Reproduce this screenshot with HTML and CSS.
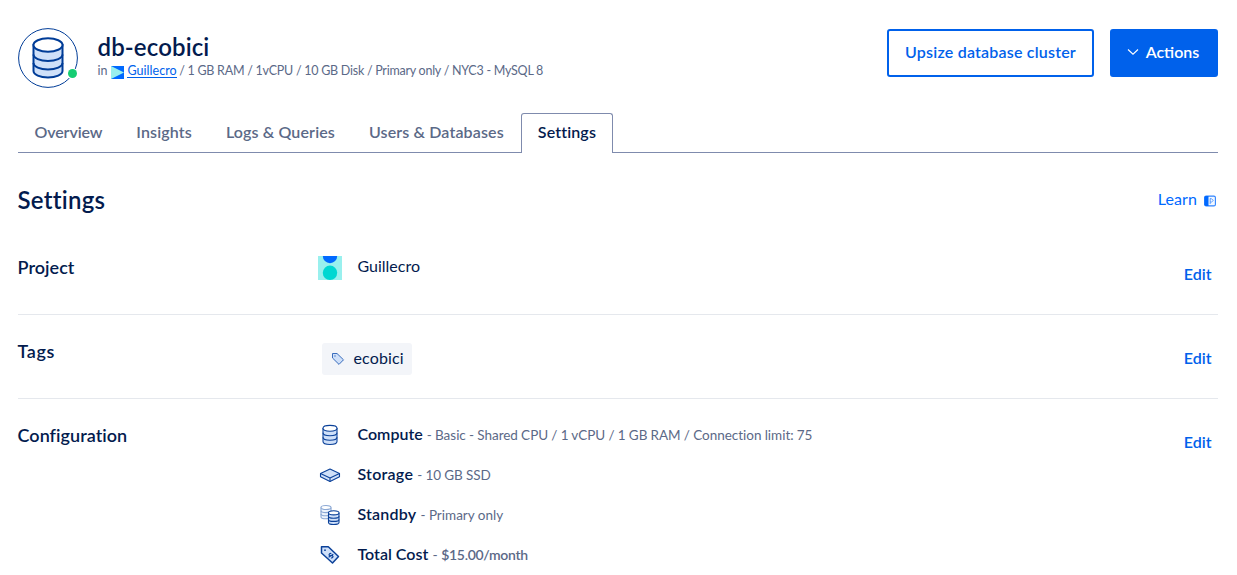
FILE: index.html
```
<!DOCTYPE html>
<html lang="en">
<head>
<meta charset="utf-8">
<title>db-ecobici</title>
<link rel="stylesheet" href="styles.css">
</head>
<body>
<main class="page">
  <header class="header">
    <div class="avatar">
      <svg width="60" height="60" viewBox="0 0 60 60" fill="none" stroke="#003c97">
        <circle cx="30" cy="30" r="29.4" stroke-width="1" fill="#fff"/>
        <path d="M15.5 16v27c0 3.6 6.5 6.500 14.500 6.500s14.500-2.900 14.500-6.500V16" fill="#cfe0f9" stroke-width="2"/>
        <ellipse cx="30" cy="17" rx="14.500" ry="6.700" fill="#fff" stroke-width="2"/>
        <path d="M15.500 26.500c0 3.600 6.500 6.500 14.500 6.500s14.500-2.900 14.500-6.500M15.500 35c0 3.600 6.500 6.500 14.500 6.500s14.500-2.900 14.500-6.500" stroke-width="2"/>
      </svg>
      <span class="status"></span>
    </div>
    <div class="heading">
      <h1 class="title">db-ecobici</h1>
      <div class="meta">
        <span>in</span>
        <svg class="flag" width="13" height="13" viewBox="0 0 13 13"><path fill="#0069ff" d="M0 0h13v13H0z"/><path fill="#99f0ee" d="M0 0l13 6.500L0 13z"/></svg>
        <a class="project-link">Guillecro</a>
        <span class="specs">/ 1 GB RAM / 1vCPU / 10 GB Disk / Primary only / NYC3 - MySQL 8</span>
      </div>
    </div>
    <div class="buttons">
      <button class="btn btn-outline">Upsize database cluster</button>
      <button class="btn btn-primary">
        <svg width="12" height="8" viewBox="0 0 12 8" fill="none" stroke="#fff" stroke-width="1.100"><path d="M1 1.500l5 4.700 5-4.700"/></svg>
        <span>Actions</span>
      </button>
    </div>
  </header>

  <nav class="tabs">
    <a class="tab tab-overview">Overview</a>
    <a class="tab">Insights</a>
    <a class="tab">Logs &amp; Queries</a>
    <a class="tab">Users &amp; Databases</a>
    <a class="tab tab-active">Settings</a>
  </nav>

  <div class="section-head">
    <h2 class="section-title">Settings</h2>
    <a class="learn">Learn
      <svg width="12" height="12" viewBox="0 0 12 12" fill="none"><rect x=".6" y="1.100" width="10.800" height="9.800" rx="1.500" stroke="#2e83ff" stroke-width="1.100" fill="#f3f8ff"/><path d="M1.500 1H4.500v10H1.500L.5 10V2z" fill="#0069ff"/><path d="M6 3.700h1.500l1.800 1.800-1.800 1.500H6M6.200 3.500v5.500" stroke="#4d95ff" stroke-width=".9"/></svg>
    </a>
  </div>

  <section class="row">
    <h3 class="label">Project</h3>
    <div class="value value-project">
      <svg width="24" height="24" viewBox="0 0 24 24"><path fill="#99f0ee" d="M0 0h24v24H0z"/><path fill="#0069ff" d="M4.800 0a7.200 7.200 0 0 0 14.400 0z"/><circle cx="12" cy="16.800" r="7.200" fill="#00d7d2"/></svg>
      <span class="project-name">Guillecro</span>
    </div>
    <a class="edit">Edit</a>
  </section>

  <section class="row">
    <h3 class="label tags-label">Tags</h3>
    <div class="value value-tags">
      <span class="chip">
        <svg width="14" height="14" viewBox="0 0 14 14" stroke="#3a6dbd" fill="#cfe0f9"><path d="M1.500 1.500h4.500l6.500 6.300-4.500 4.600L1.500 6z"/><circle cx="4" cy="4" r=".7" fill="#3a6dbd" stroke="none"/></svg>
        <span class="chip-text">ecobici</span>
      </span>
    </div>
    <a class="edit">Edit</a>
  </section>

  <section class="row row-last">
    <h3 class="label">Configuration</h3>
    <ul class="value specs-list">
      <li class="spec">
        <svg width="24" height="24" viewBox="0 0 24 24" fill="none" stroke="#0b4199" stroke-width="1.100"><path d="M5 5v13.500c0 1.700 3 3 7 3s7-1.300 7-3V5" fill="#cfe0f9"/><ellipse cx="12" cy="5.300" rx="7" ry="2.900" fill="#fff"/><path d="M5 9.800c0 1.700 3 3 7 3s7-1.300 7-3M5 14.200c0 1.700 3 3 7 3s7-1.300 7-3"/></svg>
        <p class="spec-text"><b class="spec-name compute">Compute</b> <span class="detail detail-long">- Basic - Shared CPU / 1 vCPU / 1 GB RAM / Connection limit: 75</span></p>
      </li>
      <li class="spec">
        <svg width="24" height="24" viewBox="0 0 24 24" fill="#cfe0f9" stroke="#0b4199" stroke-width="1.100" stroke-linejoin="round"><path d="M2.500 10.500L12 6l9.500 4.500v3.300L12 18.500l-9.500-4.700z"/><path d="M2.500 10.500L12 15l9.500-4.500M12 15v3.500" fill="none"/></svg>
        <p class="spec-text"><b class="spec-name storage">Storage</b> <span class="detail detail-size">- 10 GB SSD</span></p>
      </li>
      <li class="spec">
        <svg width="24" height="24" viewBox="0 0 24 24" fill="none" stroke-width="1.100"><g stroke="#8ba8d4"><path d="M3 4.500V14c0 1 2 1.800 5 1.800s5-.8 5-1.800V4.500" fill="#edf4fd"/><ellipse cx="8" cy="4.500" rx="5" ry="2" fill="#fff"/><path d="M3 7.800c0 1 2 1.800 5 1.800s5-.8 5-1.800M3 11c0 1 2 1.800 5 1.800s5-.8 5-1.800"/></g><g stroke="#0b4199"><path d="M10.500 9.800V19.500c0 1.200 2 2 5 2s5.500-.8 5.500-2V9.800" fill="#cfe0f9"/><ellipse cx="15.750" cy="9.800" rx="5.250" ry="2.100" fill="#fff"/><path d="M10.500 13.200c0 1.200 2 2 5 2s5.500-.8 5.500-2M10.500 16.400c0 1.200 2 2 5 2s5.500-.8 5.500-2"/></g></svg>
        <p class="spec-text"><b class="spec-name standby">Standby</b> <span class="detail detail-standby">- Primary only</span></p>
      </li>
      <li class="spec">
        <svg width="24" height="24" viewBox="0 0 24 24" fill="none" stroke="#0b4199" stroke-linejoin="round"><path d="M3.500 3.800h6.800l10.200 9.700-6 6.500L3.500 10z" fill="#cfe0f9" stroke-width="1.500"/><circle cx="7" cy="7.200" r=".9" fill="#0b4199" stroke="none"/><path d="M13.300 10.700c-1.400-.7-2.800.6-2 1.800.8 1 2.100-.6 3.200.3 1.200 1-.1 2.700-1.600 2M15.300 11.300l-4.700 3" stroke-width="1.200"/></svg>
        <p class="spec-text"><b class="spec-name">Total Cost</b> <span class="detail">- <b class="price">$15.00/month</b></span></p>
      </li>
    </ul>
    <a class="edit">Edit</a>
  </section>
</main>
</body>
</html>
```

FILE: styles.css
```
* { box-sizing: border-box; margin: 0; padding: 0; }
html, body { height: 575px; overflow: hidden; }
body {
  background: #fff;
  color: #031b4e;
  font: 16px/24px Lato, "Open Sans", sans-serif;
  font-variant-ligatures: none;
}
svg { display: block; flex: none; }
.page { width: 1218px; padding: 28px 0 0 18px; }

.header { display: flex; height: 60px; }
.avatar { position: relative; width: 60px; height: 60px; }
.status {
  position: absolute;
  left: 50px;
  top: 41px;
  width: 9px;
  height: 9px;
  border-radius: 50%;
  background: #15cd72;
  box-shadow: 0 0 0 1px #fff;
}
.heading { margin-left: 19.5px; padding-top: 4px; }
.title { font-size: 24px; line-height: 30px; font-weight: 600; letter-spacing: .12px; }
.meta { display: flex; font-size: 12.5px; line-height: 18px; color: #5b6987; white-space: nowrap; }
.flag { margin: 4px 3px 0 4px; }
.project-link {
  height: 16px;
  color: #0061eb;
  border-bottom: 1px solid #0061eb;
  letter-spacing: .04px;
}
.specs { margin-left: 2.5px; letter-spacing: -.24px; word-spacing: -.05px; }

.buttons { display: flex; gap: 16px; margin: 1px 0 0 auto; }
.btn {
  display: flex;
  align-items: center;
  justify-content: center;
  height: 48px;
  padding-bottom: 2px;
  border: 2px solid #0061eb;
  border-radius: 3px;
  font: 600 16px/24px Lato, "Open Sans", sans-serif;
}
.btn-outline { width: 207px; background: #fff; color: #0061eb; letter-spacing: .2px; }
.btn-primary { width: 108px; padding-right: 2px; gap: 7px; background: #0061eb; color: #fff; }

.tabs { display: flex; height: 40px; margin-top: 25px; border-bottom: 1px solid #7f8bad; }
.tab {
  height: 40px;
  padding: 6px 16px 0;
  border: 1px solid transparent;
  border-bottom: 0;
  font-weight: 600;
  color: #5b6987;
  letter-spacing: .13px;
}
.tab-overview { padding-left: 15.5px; letter-spacing: -.12px; }
.tab-active {
  background: #fff;
  border-color: #7f8bad;
  border-radius: 3px 3px 0 0;
  margin-left: .4px;
  padding-left: 15.7px;
  color: #031b4e;
}

.section-head { display: flex; justify-content: space-between; margin-top: 32px; height: 30px; }
.section-title { margin-left: -.5px; font-size: 24px; line-height: 30px; font-weight: 600; letter-spacing: .25px; }
.learn { display: flex; align-items: center; gap: 7px; height: 28px; padding-right: 2px; color: #0069ff; letter-spacing: .1px; }
.learn svg { margin-top: 4px; }

.row { display: flex; height: 84px; border-bottom: 1px solid #e5e8ed; }
.section-head + .row { height: 100px; padding-top: 16px; }
.row-last { height: 180px; border-bottom: 0; }
.label { width: 300px; padding-top: 24px; font-size: 18px; line-height: 24px; font-weight: 600; letter-spacing: .04px; text-indent: -.5px; }
.tags-label { letter-spacing: .6px; }
.value { flex: 1; }
.value-project { display: flex; gap: 15.5px; padding-top: 25px; }
.project-name { line-height: 20px; }
.value-tags { padding: 28px 0 0 4px; }
.chip {
  display: flex;
  align-items: center;
  gap: 8.5px;
  width: 90px;
  height: 32px;
  padding-left: 9px;
  border-radius: 3px;
  background: #f3f5f9;
}
.chip-text { padding-bottom: 2px; letter-spacing: .15px; }
.edit { padding: 31px 6.500px 0 0; font-weight: 600; color: #0061eb; }

.specs-list { display: grid; align-content: start; gap: 16px; padding-top: 24px; list-style: none; }
.spec { display: flex; gap: 15.5px; height: 24px; }
.spec-text { line-height: 22px; white-space: nowrap; }
.spec-name { font-weight: 600; }
.storage { letter-spacing: .25px; }
.standby { letter-spacing: .2px; }
.detail { font-size: 14px; color: #5b6987; }
.detail-long { font-size: 13.5px; letter-spacing: -.01px; word-spacing: -.25px; }
.detail-size { font-size: 13.5px; letter-spacing: -.1px; }
.detail-standby { font-size: 13.5px; }
.price { font-weight: 600; letter-spacing: -.3px; }
```
